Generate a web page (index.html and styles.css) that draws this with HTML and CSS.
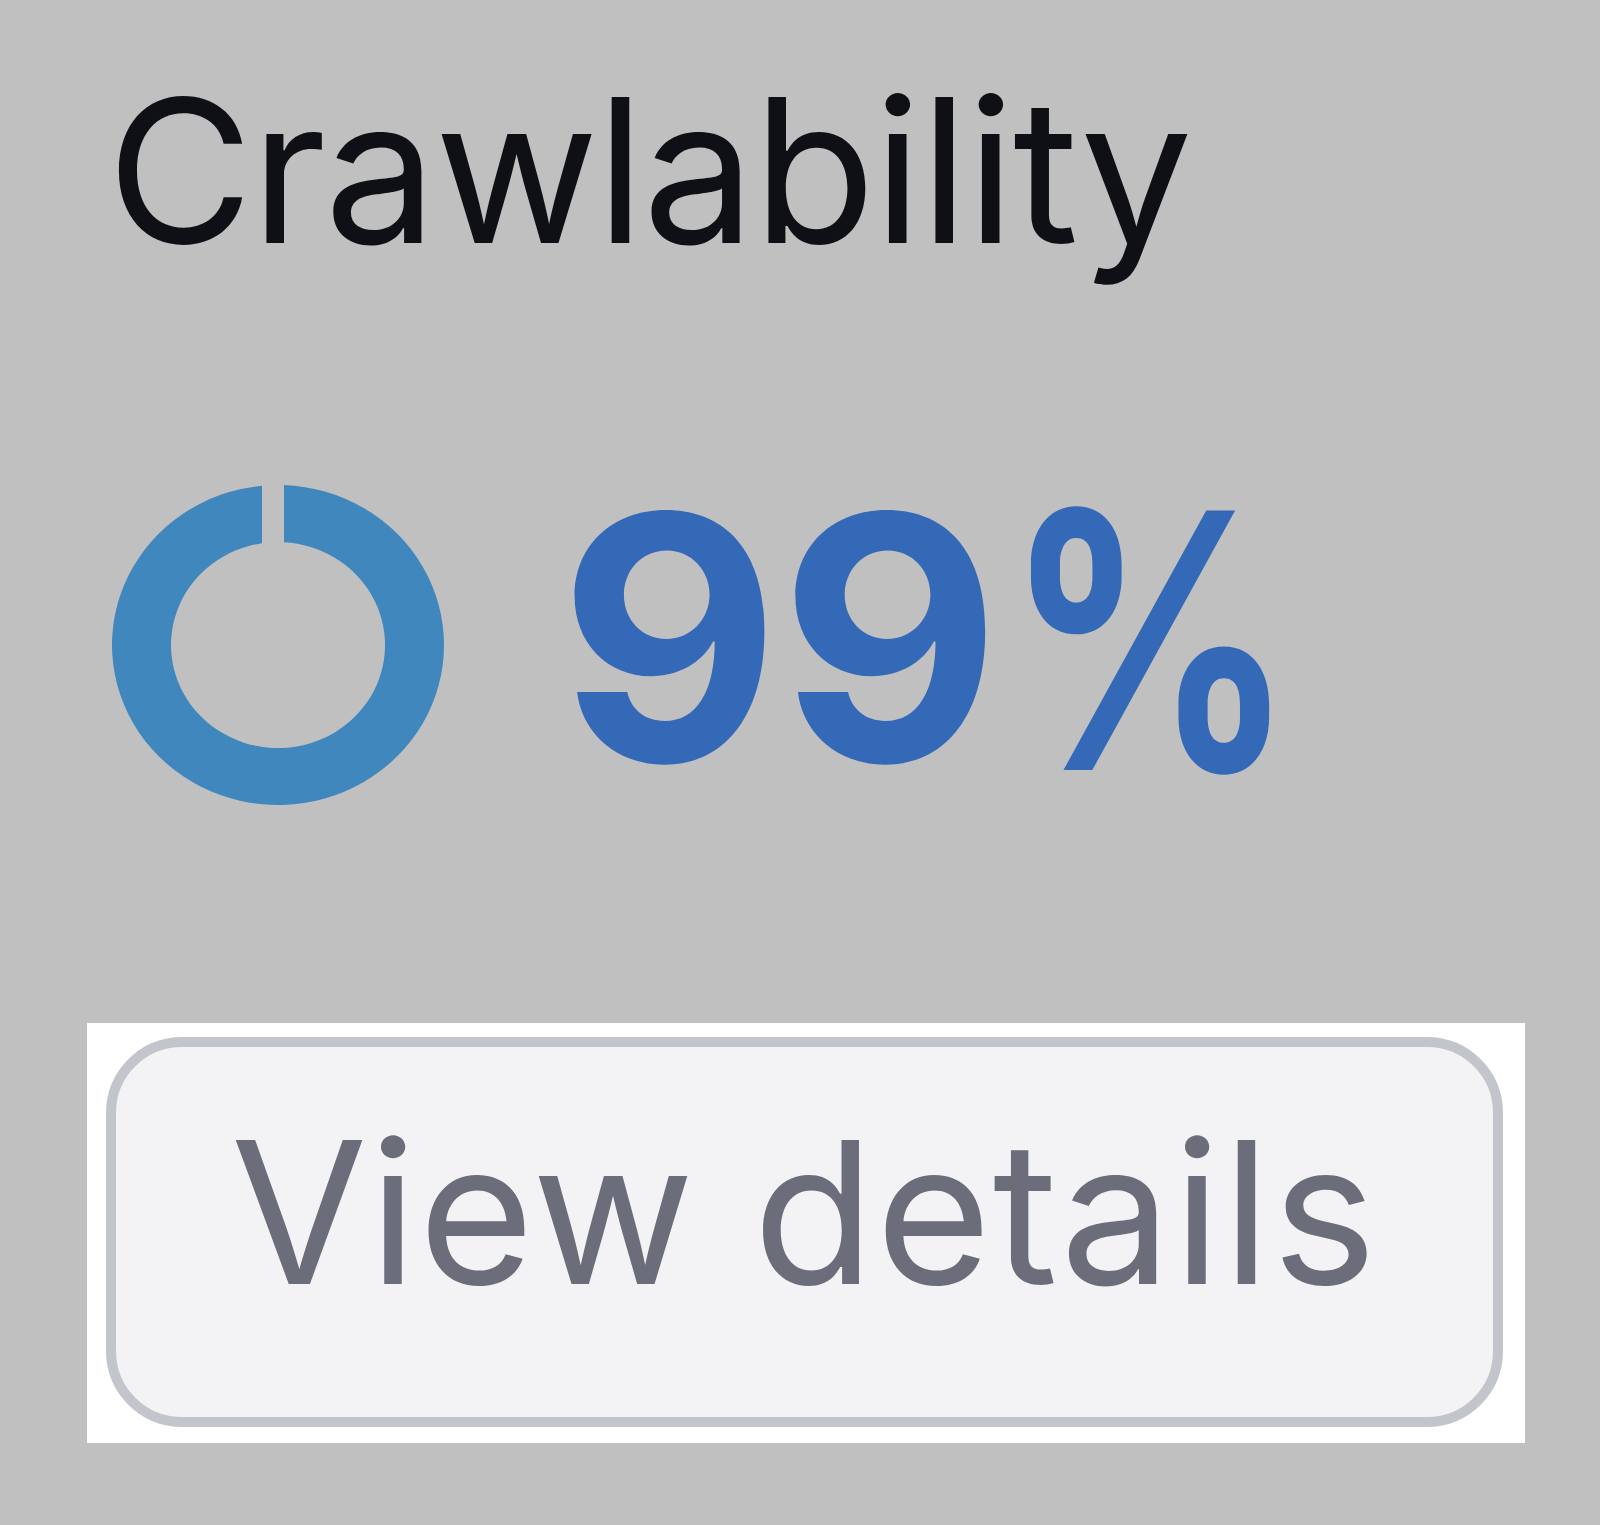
FILE: index.html
```html
<!DOCTYPE html>
<html lang="en">
<head>
<meta charset="utf-8">
<title>Crawlability</title>
<link rel="stylesheet" href="styles.css">
</head>
<body>
<main class="widget">
  <h1 class="widget-title">Crawlability</h1>
  <div class="score">
    <svg class="score-ring" width="332" height="320" viewBox="0 0 332 320" aria-hidden="true">
      <path d="M172 0.1 A166 160 0 1 1 150 0.74 L150 58.2 A107 103 0 1 0 172 57.2 Z" fill="#4087be"/>
    </svg>
    <span class="score-value">99<span class="score-unit">%</span></span>
  </div>
  <div class="action-frame">
    <button class="action-btn" type="button">View details</button>
  </div>
</main>
</body>
</html>
```

FILE: styles.css
```css
html, body {
  margin: 0;
  padding: 0;
}

body {
  width: 1600px;
  height: 1525px;
  background: #c0c0c0;
  font-family: Inter, "Noto Sans", "Liberation Sans", sans-serif;
  overflow: hidden;
}

.widget {
  display: flex;
  flex-direction: column;
  padding: 70px 0 0 87px;
}

.widget-title {
  margin: 0 0 0 20px;
  font-size: 200px;
  font-weight: 400;
  line-height: 1;
  color: #0f1016;
  letter-spacing: -2px;
}

.score {
  display: flex;
  align-items: flex-start;
  margin: 215px 0 0 25px;
  gap: 115px;
}

.score-ring {
  display: block;
  flex: none;
}

.score-value {
  margin-top: -17px;
  font-size: 340px;
  font-weight: 700;
  line-height: 1;
  color: #3469b8;
  white-space: nowrap;
}

/* the percent sign is set narrower and a touch taller than the digits */
.score-unit {
  display: inline-block;
  transform: translate(4px, 5px) scale(0.84, 1.05);
  transform-origin: 0 62%;
}

.action-frame {
  margin-top: 215px;
  width: 1438px;
  height: 420px;
  box-sizing: border-box;
  background: #ffffff;
  padding: 14px 22px 16px 19px;
}

.action-btn {
  display: flex;
  align-items: center;
  justify-content: center;
  width: 100%;
  height: 100%;
  box-sizing: border-box;
  border: 10px solid #c3c5cc;
  border-radius: 76px;
  background: #f3f3f5;
  color: #6b6e7a;
  font-family: inherit;
  font-size: 198px;
  font-weight: 400;
  line-height: 1;
  letter-spacing: 1.6px;
  padding: 0 0 40px 0;
}
```
